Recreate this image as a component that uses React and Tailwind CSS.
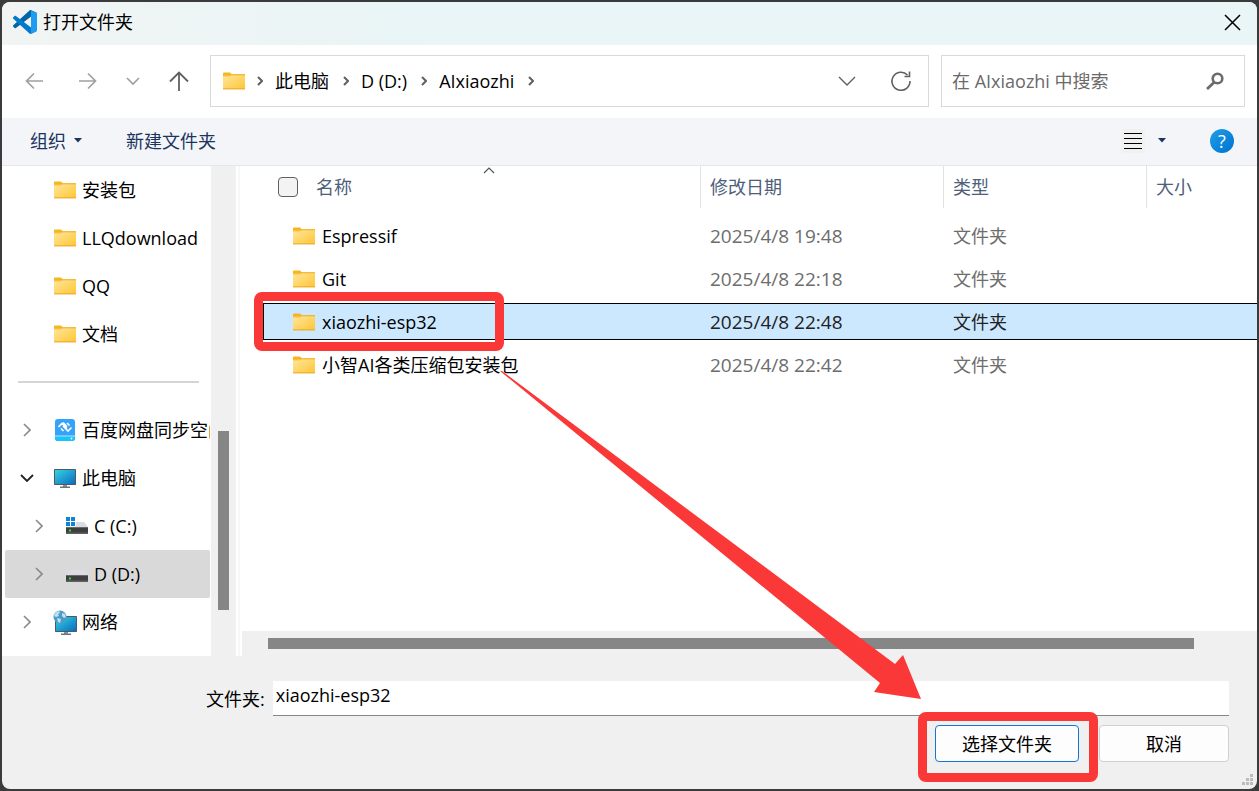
import { useState } from "react";
import clsx from "clsx";

const FolderIcon = () => (
  <svg width="22" height="18" viewBox="0 0 22 18" className="shrink-0">
    <defs>
      <linearGradient id="folder" x1="0" y1="0" x2="1" y2="1">
        <stop offset="0" stopColor="#ffe69c" />
        <stop offset="1" stopColor="#ffc636" />
      </linearGradient>
    </defs>
    <path d="M0 1.5Q0 .5 1 .5H7L9 2.5H22V8H0Z" fill="#f8b51c" />
    <rect x="0" y="3" width="22" height="14" rx="0.8" fill="url(#folder)" />
    <path d="M0 4V3.8H6.5L8.5 2.8H22" stroke="#f0b020" strokeWidth="1" fill="none" />
    <rect x="0" y="16.4" width="22" height="1" fill="#e8a61c" />
  </svg>
);

const VsCodeIcon = () => (
  <svg width="24" height="24" viewBox="0 0 256 256">
    <path
      d="M246.900 27.600 194.200 2.200c-6.100-2.900-13.400-1.700-18.200 3.100L3.300 162.800c-4.600 4.200-4.600 11.500 0 15.700l14.100 12.900c3.800 3.500 9.500 3.700 13.600.6L239 34.200c7-5.300 17-.3 17 8.400v-.6c0-6.100-3.500-11.700-9.100-14.400Z"
      fill="#0065a9"
    />
    <path
      d="M246.900 228.400l-52.700 25.400c-6.100 2.900-13.400 1.700-18.200-3.100L3.300 93.200c-4.600-4.200-4.600-11.500 0-15.700l14.100-12.900c3.800-3.500 9.500-3.700 13.600-.6L239 221.800c7 5.300 17 .3 17-8.400v.6c0 6.100-3.500 11.700-9.100 14.400Z"
      fill="#007acc"
    />
    <path
      d="M194.200 253.800c-6.100 2.900-13.400 1.700-18.200-3.100 5.900 5.900 16 1.700 16-6.600V11.900c0-8.300-10.100-12.500-16-6.600 4.800-4.800 12.100-6 18.200-3.100l52.700 25.400c5.500 2.700 9.100 8.300 9.100 14.400v172c0 6.100-3.500 11.700-9.100 14.400Z"
      fill="#1f9cf0"
    />
  </svg>
);

const SyncDriveIcon = () => (
  <svg width="22" height="24" viewBox="0 0 22 24" className="shrink-0">
    <rect x="1" y="1" width="20" height="22" rx="3" fill="#36a3fa" />
    <path d="M1 18H21V20a3 3 0 0 1-3 3H4a3 3 0 0 1-3-3Z" fill="#19c3fb" />
    <path d="M1 18H21" stroke="#d5f1ff" strokeWidth="0.8" />
    <path
      d="M4.500 9 8 5.500 13 10.500M9 4.500 13 8.500M9 8 14 13 17.500 9.500M13 5 15.500 7.500M7 10.500 9.500 13"
      stroke="#fff"
      strokeWidth="1.600"
      fill="none"
    />
    <circle cx="17.500" cy="20.500" r="0.900" fill="#fff" />
  </svg>
);

const MonitorIcon = () => (
  <svg width="22" height="20" viewBox="0 0 22 20" className="shrink-0">
    <defs>
      <linearGradient id="screen" x1="0" y1="0" x2="1" y2="1">
        <stop offset="0" stopColor="#35d3e2" />
        <stop offset="1" stopColor="#0b6cc0" />
      </linearGradient>
    </defs>
    <rect x="0" y="1" width="22" height="16" rx="0.8" fill="#4a5a66" />
    <rect x="1" y="2" width="20" height="14" fill="url(#screen)" />
    <rect x="9" y="17" width="4" height="2" fill="#8a9299" />
    <rect x="6" y="18.500" width="10" height="1.500" fill="#6a747c" />
  </svg>
);

const NetworkIcon = () => (
  <svg width="24" height="25" viewBox="0 0 24 25" className="shrink-0">
    <rect x="2" y="6" width="22" height="16" rx="0.8" fill="#4a5a66" />
    <rect x="3" y="7" width="20" height="14" fill="url(#screen)" />
    <rect x="11" y="22" width="4" height="2" fill="#8a9299" />
    <rect x="8" y="23.500" width="10" height="1.500" fill="#6a747c" />
    <circle cx="7" cy="7" r="6.500" fill="#4a9cc9" />
    <path d="M1 6q1-4 5-5l1 2-2 1 1 2-3 1ZM4 8l4 1-1 4-2-1ZM9 3l3 1 1 3-2 1-2-2Z" fill="#c5dfec" />
  </svg>
);

const DriveIcon = ({ system }) => (
  <svg width="22" height="18" viewBox="0 0 22 18" className="shrink-0">
    <path d="M4 5H18L22 10H0Z" fill="#dcdde3" />
    <rect x="0" y="10" width="22" height="7" rx="0.6" fill="#3f3f3f" />
    <rect x="0" y="10" width="22" height="1" fill="#6a6a6a" />
    <rect x="0" y="15.500" width="22" height="1.500" fill="#606060" />
    <rect x="3" y="12.500" width="2" height="2" fill="#35e02c" />
    {system && (
      <>
        <rect x="0" y="0" width="10" height="9.500" fill="#fff" />
        <path d="M0 0H4V4H0ZM5 0H9V4H5ZM0 5H4V9H0ZM5 5H9V9H5Z" fill="#0d84d8" />
      </>
    )}
  </svg>
);

const Stroke = ({ d, w = 20, h = 20, width = 2, className }) => (
  <svg
    width={w}
    height={h}
    viewBox={`0 0 ${w} ${h}`}
    fill="none"
    stroke="currentColor"
    strokeWidth={width}
    className={clsx("shrink-0", className)}
  >
    <path d={d} />
  </svg>
);

const Caret = () => (
  <svg width="8" height="5" viewBox="0 0 8 5">
    <path d="M0 0H8L4 4.500Z" fill="#1b3560" />
  </svg>
);

const pinned = ["安装包", "LLQdownload", "QQ", "文档"];

const tree = [
  { name: "百度网盘同步空间", icon: <SyncDriveIcon /> },
  { name: "此电脑", icon: <MonitorIcon />, open: true },
  { name: "C (C:)", icon: <DriveIcon system />, nested: true },
  { name: "D (D:)", icon: <DriveIcon />, nested: true, active: true },
  { name: "网络", icon: <NetworkIcon /> },
];

const files = [
  { name: "Espressif", date: "2025/4/8 19:48" },
  { name: "Git", date: "2025/4/8 22:18" },
  { name: "xiaozhi-esp32", date: "2025/4/8 22:48" },
  { name: "小智AI各类压缩包安装包", date: "2025/4/8 22:42" },
];

const crumbs = ["此电脑", "D (D:)", "AIxiaozhi"];

const TitleBar = () => (
  <header className="flex h-[43px] items-center justify-between bg-linear-to-r from-[#f1f4f3] to-[#e9f5f7] to-35% pb-[3px] pl-[11px] pr-4">
    <div className="flex items-center gap-[6px]">
      <VsCodeIcon />
      <h1>打开文件夹</h1>
    </div>
    <button aria-label="关闭">
      <Stroke w={17} h={17} width={1.5} d="M1 1 16 16M16 1 1 16" />
    </button>
  </header>
);

const NavBar = () => (
  <nav className="flex h-[73px] items-center bg-white pb-[2px] pl-[22px] pr-3 text-[#a0a0a0]">
    <div className="flex w-[186px] shrink-0 items-center">
      <button aria-label="后退">
        <Stroke d="M19 10H3M10 2.500 2.500 10 10 17.500" width={1.7} />
      </button>
      <button aria-label="前进" className="ml-[34px]">
        <Stroke d="M1 10H17M10 2.500 17.500 10 10 17.500" width={1.7} />
      </button>
      <button aria-label="最近位置" className="ml-7">
        <Stroke w={14} d="M1 7 7 13 13 7" width={1.7} />
      </button>
      <button aria-label="上移" className="ml-[29px] text-[#606060]">
        <Stroke d="M10 20V2M1 10.500 10 1.500 19 10.500" width={1.8} />
      </button>
    </div>
    <div className="flex h-[52px] flex-1 items-center border border-[#d9d9d9] pl-3 pr-4 text-[#606060]">
      <FolderIcon />
      <Stroke w={6} h={10} d="M1 1 5 5 1 9" className="ml-3" />
      {crumbs.map((crumb) => (
        <div key={crumb} className="flex items-center">
          <a href="#" className="ml-3 text-black">
            {crumb}
          </a>
          <Stroke w={6} h={10} d="M1 1 5 5 1 9" className="ml-[14px]" />
        </div>
      ))}
      <button aria-label="历史记录" className="ml-auto">
        <Stroke w={18} h={10} d="M1 1 9 9 17 1" width={1.4} />
      </button>
      <button aria-label="刷新" className="ml-[34px]">
        <Stroke w={22} h={22} width={1.6} d="M20 11A9 9 0 1 1 17.500 5M19.500 1.500V6.500H14.500" />
      </button>
    </div>
    <div className="ml-3 flex h-[52px] w-[304px] items-center border border-[#d9d9d9] pl-[10px] pr-5">
      <input
        type="search"
        aria-label="搜索"
        placeholder="在 AIxiaozhi 中搜索"
        className="min-w-0 flex-1 outline-none placeholder:text-[#6a6a6a]"
      />
      <svg width="18" height="18" viewBox="0 0 18 18" fill="none" stroke="#6b6b6b">
        <circle cx="11.500" cy="6.500" r="4.800" strokeWidth="2.600" />
        <path d="M8 10.500 1 17" strokeWidth="2.800" />
      </svg>
    </div>
  </nav>
);

const Toolbar = () => (
  <div className="flex h-12 items-center border-b border-[#e5e7e9] bg-[#f4f5f8] pb-[2px] pl-7 pr-[23px] text-[#1b3560]">
    <button className="flex items-center gap-2">
      组织 <Caret />
    </button>
    <button className="ml-[44px]">新建文件夹</button>
    <button aria-label="视图" className="ml-auto flex items-center gap-[13px]">
      <span className="rounded-sm bg-[#f1f1f1] p-[2px]">
        <Stroke w={20} h={20} width={1} d="M1 2.500H19M1 7.500H19M1 12.500H19M1 17.500H19" className="text-black" />
      </span>
      <Caret />
    </button>
    <button
      aria-label="帮助"
      className="ml-[44px] size-6 rounded-full bg-linear-to-br from-[#1e9fe8] to-[#0072cf] font-medium leading-6 text-white"
    >
      ?
    </button>
  </div>
);

const Sidebar = () => (
  <aside className="w-[209px] shrink-0 overflow-hidden whitespace-nowrap">
    <ul>
      {pinned.map((name) => (
        <li key={name} className="flex h-12 items-center gap-[6px] pl-[52px]">
          <FolderIcon />
          <span>{name}</span>
        </li>
      ))}
    </ul>
    <div className="flex h-12 items-center pl-4 pr-3">
      <hr className="w-full border-t-2 border-[#d5d5d5]" />
    </div>
    <ul>
      {tree.map(({ name, icon, open, nested, active }) => (
        <li
          key={name}
          className={clsx(
            "ml-[3px] mr-px flex h-12 items-center rounded-xs",
            nested ? "pl-[27px]" : "pl-[15px]",
            active && "bg-[#d9d9d9]"
          )}
        >
          <span className="flex w-[14px] shrink-0 justify-center">
            {open ? (
              <Stroke w={14} h={8} d="M1 1 7 7 13 1" width={1.8} className="text-[#222]" />
            ) : (
              <Stroke w={8} h={14} d="M1 1 7 7 1 13" width={1.6} className="text-[#8a8a8a]" />
            )}
          </span>
          <span className="ml-[19px] flex w-6 shrink-0 justify-center">{icon}</span>
          <span className="ml-[5px] min-w-0 overflow-hidden">{name}</span>
        </li>
      ))}
    </ul>
  </aside>
);

const FileTable = ({ selected, onSelect }) => (
  <table className="-mt-[6px] w-full table-fixed border-separate border-spacing-x-0 border-spacing-y-[6px] text-left text-[#6d6d6d]">
    <colgroup>
      <col className="w-[437px]" />
      <col className="w-[243px]" />
      <col className="w-[203px]" />
      <col />
    </colgroup>
    <thead className="text-[#4c607a]">
      <tr className="h-[45px] align-top">
        <th className="relative p-0 font-normal">
          <label className="flex h-[42px] items-center gap-[18px] pl-[15px]">
            <input
              type="checkbox"
              className="size-5 appearance-none rounded-sm border border-[#5f5f5f] bg-[#f3f3f3]"
            />
            名称
          </label>
          <Stroke w={12} h={7} d="M1 6 6 1 11 6" width={1.2} className="absolute left-[220px] top-[1px] text-[#555]" />
        </th>
        <th className="p-0 font-normal">
          <div className="flex h-[42px] items-center border-l border-[#e2e2e2] pl-[9px]">修改日期</div>
        </th>
        <th className="p-0 font-normal">
          <div className="flex h-[42px] items-center border-l border-[#e2e2e2] pl-[9px]">类型</div>
        </th>
        <th className="p-0 font-normal">
          <div className="flex h-[42px] items-center border-l border-[#e2e2e2] pl-[9px]">大小</div>
        </th>
      </tr>
    </thead>
    <tbody>
      {files.map(({ name, date }) => {
        const active = name === selected;
        const cell = clsx(
          "border-y p-0",
          active ? "border-black bg-[#cce8ff] text-[#222]" : "border-transparent"
        );
        return (
          <tr key={name} className="h-[37px]" onClick={() => onSelect(name)}>
            <td className={clsx(cell, "relative border-l")}>
              <div className="flex items-center gap-[7px] pl-[29px] text-black">
                <FolderIcon />
                {name}
              </div>
              {active && (
                <div className="absolute -left-[10px] -top-3 h-[59px] w-[250px] rounded-lg border-[9px] border-[#fb3838]" />
              )}
            </td>
            <td className={clsx(cell, "pl-[10px] text-[19px]")}>{date}</td>
            <td className={clsx(cell, "pl-[10px]")}>文件夹</td>
            <td className={cell}></td>
          </tr>
        );
      })}
    </tbody>
  </table>
);

const App = () => {
  const [folder, setFolder] = useState("xiaozhi-esp32");
  return (
    <div className="flex min-h-screen bg-[#3b3b3b] p-[2px] font-['Open_Sans','Noto_Sans_CJK_SC',sans-serif] text-[18px] leading-6 text-black">
      <div className="relative flex flex-1 flex-col overflow-hidden rounded-lg bg-[#f0f0f0]">
        <TitleBar />
        <NavBar />
        <Toolbar />
        <main className="flex flex-1 bg-white">
          <Sidebar />
          <div className="flex w-[25px] shrink-0 flex-col items-center bg-[#f0f0f0] pt-[265px]">
            <div className="h-[179px] w-[11px] bg-[#868686]" />
          </div>
          <div className="ml-[2px] w-[2px] shrink-0 bg-[#f7f7f7]" />
          <div className="flex min-w-0 flex-1 flex-col pl-[2px]">
            <div className="flex-1 pl-[21px]">
              <FileTable selected="xiaozhi-esp32" onSelect={setFolder} />
            </div>
            <div className="flex h-[25px] items-center bg-[#f0f0f0] pl-[26px] pr-[63px]">
              <div className="h-[11px] flex-1 bg-[#868686]" />
            </div>
          </div>
        </main>
        <footer className="h-[133px] pl-[204px] pr-7 pt-[25px]">
          <div className="flex items-center gap-2">
            <label htmlFor="folder-name" className="shrink-0">
              文件夹:
            </label>
            <input
              id="folder-name"
              value={folder}
              onChange={(e) => setFolder(e.target.value)}
              className="h-[35px] min-w-0 flex-1 border-b border-[#868686] bg-white pb-[6px] pl-[3px] outline-none"
            />
          </div>
          <div className="mt-[9px] flex justify-end gap-5">
            <div className="relative">
              <button className="h-[37px] w-36 rounded-sm border border-[#0f78d4] bg-[#fdfdfd]">选择文件夹</button>
              <div className="pointer-events-none absolute -left-[17px] -top-[13px] h-[70px] w-[180px] rounded-lg border-[9px] border-[#fb3838]" />
            </div>
            <button className="h-[37px] w-[130px] rounded-sm border border-[#d0d0d0] bg-[#fdfdfd]">取消</button>
          </div>
        </footer>
        <svg
          viewBox="0 0 1255 787"
          preserveAspectRatio="none"
          className="pointer-events-none absolute inset-0 size-full"
        >
          <path d="M498 369 500 369 893 662 901 653 919 697 872 690 878 681Z" fill="#fb3838" />
        </svg>
        <svg width="12" height="12" viewBox="0 0 12 12" className="absolute bottom-[3px] right-[3px]">
          <path d="M8 0h3v3H8ZM4 4h3v3H4ZM8 4h3v3H8ZM0 8h3v3H0ZM4 8h3v3H4ZM8 8h3v3H8Z" fill="#bcbcbc" />
        </svg>
      </div>
    </div>
  );
};

export default App;
